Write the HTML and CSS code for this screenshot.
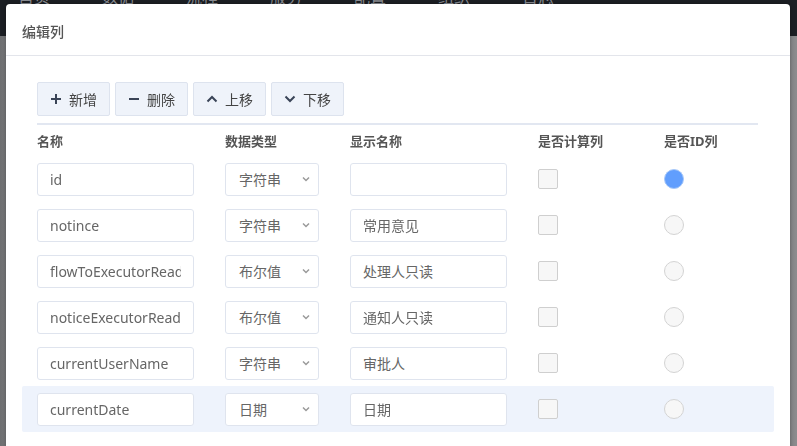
FILE: index.html
```html
<!DOCTYPE html>
<html lang="zh">
<head>
  <meta charset="UTF-8">
  <title>编辑列</title>
  <link rel="stylesheet" href="styles.css">
</head>
<body>

  <div class="backdrop">
    <div class="topbar">
      <span>首页</span><span>数据</span><span>流程</span><span>服务</span><span>配置</span><span>组织</span><span>日志</span>
    </div>
    <div class="page"></div>
  </div>

  <div class="modal">
    <div class="modal-header">编辑列</div>

    <div class="modal-body">
      <div class="toolbar">
        <button class="tb-btn">
          <svg viewBox="0 0 12 12" width="12" height="12"><path d="M6 1v10M1 6h10" stroke="#3a4457" stroke-width="2"/></svg>
          新增
        </button>
        <button class="tb-btn">
          <svg viewBox="0 0 12 12" width="12" height="12"><path d="M1 6h10" stroke="#3a4457" stroke-width="2"/></svg>
          删除
        </button>
        <button class="tb-btn">
          <svg viewBox="0 0 12 12" width="12" height="12"><path d="M1.5 8.5L6 4l4.5 4.5" fill="none" stroke="#3a4457" stroke-width="2"/></svg>
          上移
        </button>
        <button class="tb-btn">
          <svg viewBox="0 0 12 12" width="12" height="12"><path d="M1.5 3.5L6 8l4.5-4.5" fill="none" stroke="#3a4457" stroke-width="2"/></svg>
          下移
        </button>
      </div>

      <div class="grid head">
        <div>名称</div>
        <div>数据类型</div>
        <div>显示名称</div>
        <div>是否计算列</div>
        <div>是否ID列</div>
      </div>

      <div id="rows"></div>
    </div>
  </div>

  <script>
    // 列数据
    const cols = [
      { name: "id", type: "字符串", label: "", id: true },
      { name: "notince", type: "字符串", label: "常用意见" },
      { name: "flowToExecutorReadonly", type: "布尔值", label: "处理人只读" },
      { name: "noticeExecutorReadonly", type: "布尔值", label: "通知人只读" },
      { name: "currentUserName", type: "字符串", label: "审批人" },
      { name: "currentDate", type: "日期", label: "日期", active: true }
    ];

    const rows = document.getElementById("rows");
    cols.forEach(function (c) {
      const row = document.createElement("div");
      row.className = "grid row" + (c.active ? " active" : "");
      row.innerHTML =
        `<div><input class="field name" value="${c.name}"></div>` +
        `<div><div class="select"><span>${c.type}</span>` +
        `<svg viewBox="0 0 8 6" width="8" height="6"><path d="M1 1.5l3 3 3-3" fill="none" stroke="#9a9a9a" stroke-width="1.5"/></svg></div></div>` +
        `<div><input class="field" value="${c.label}"></div>` +
        `<div><span class="check"></span></div>` +
        `<div><span class="radio${c.id ? " on" : ""}"></span></div>`;
      rows.appendChild(row);
    });
  </script>

</body>
</html>
```

FILE: styles.css
```css
* { box-sizing: border-box; }
body { margin: 0; font-family: "Noto Sans", "Noto Sans CJK SC", sans-serif; background: #7b7b7d; overflow: hidden; }

.backdrop { height: 446px; }
.topbar { height: 36px; background: #1c1f24; display: flex; gap: 52px; padding-left: 18px; overflow: hidden; }
.topbar span { color: #8a8d93; font-size: 16px; line-height: 16px; margin-top: -11px; }
.page { height: 410px; background: linear-gradient(90deg, #6d6e70 0, #7a7b7d 6px, #868789 790px, #8c8c8e 797px); }

.modal { position: fixed; left: 6px; top: 4px; width: 784px; height: 460px; background: #fff; border-radius: 4px; box-shadow: 0 0 4px rgba(0,0,0,0.35); }
.modal-header { height: 52px; padding: 17px 16px 0; font-size: 14px; color: #555; font-weight: 500; border-bottom: 1px solid #e3e5eb; }

.modal-body { padding: 26px 31px 0 31px; }
.toolbar { display: flex; gap: 5px; padding-bottom: 7px; border-bottom: 2px solid #e2e7f1; width: 721px; }
.tb-btn { display: flex; align-items: center; gap: 7px; min-width: 73px; height: 34px; padding: 0 11px 0 12px; background: #eff3fa; border: 1px solid #dde3ee; border-radius: 2px; font-family: inherit; font-size: 14px; color: #444; }

.grid { display: grid; grid-template-columns: 188px 125px 188px 126px 1fr; align-items: center; }
.head { height: 31px; font-size: 13px; font-weight: bold; color: #555; }
.row { height: 46px; margin: 0 -15px; padding: 0 15px; border-radius: 2px; }
.row.active { background: #eef3fc; }

.field { width: 157px; height: 33px; border: 1px solid #dfe4ee; border-radius: 3px; padding: 0 12px; font-family: inherit; font-size: 14px; color: #666; background: #fff; outline: none; }
.select { width: 94px; height: 33px; border: 1px solid #dfe4ee; border-radius: 3px; display: flex; align-items: center; justify-content: space-between; padding: 0 8px 0 13px; font-size: 14px; color: #666; background: #fff; }
.check { display: block; width: 20px; height: 20px; border: 1px solid #cfcfcf; border-radius: 2px; background: #f7f7f7; }
.radio { display: block; width: 20px; height: 20px; border: 1px solid #d3d3d3; border-radius: 50%; background: #f7f7f7; }
.radio.on { background: #619efd; border-color: #a8c8f8; }
```
